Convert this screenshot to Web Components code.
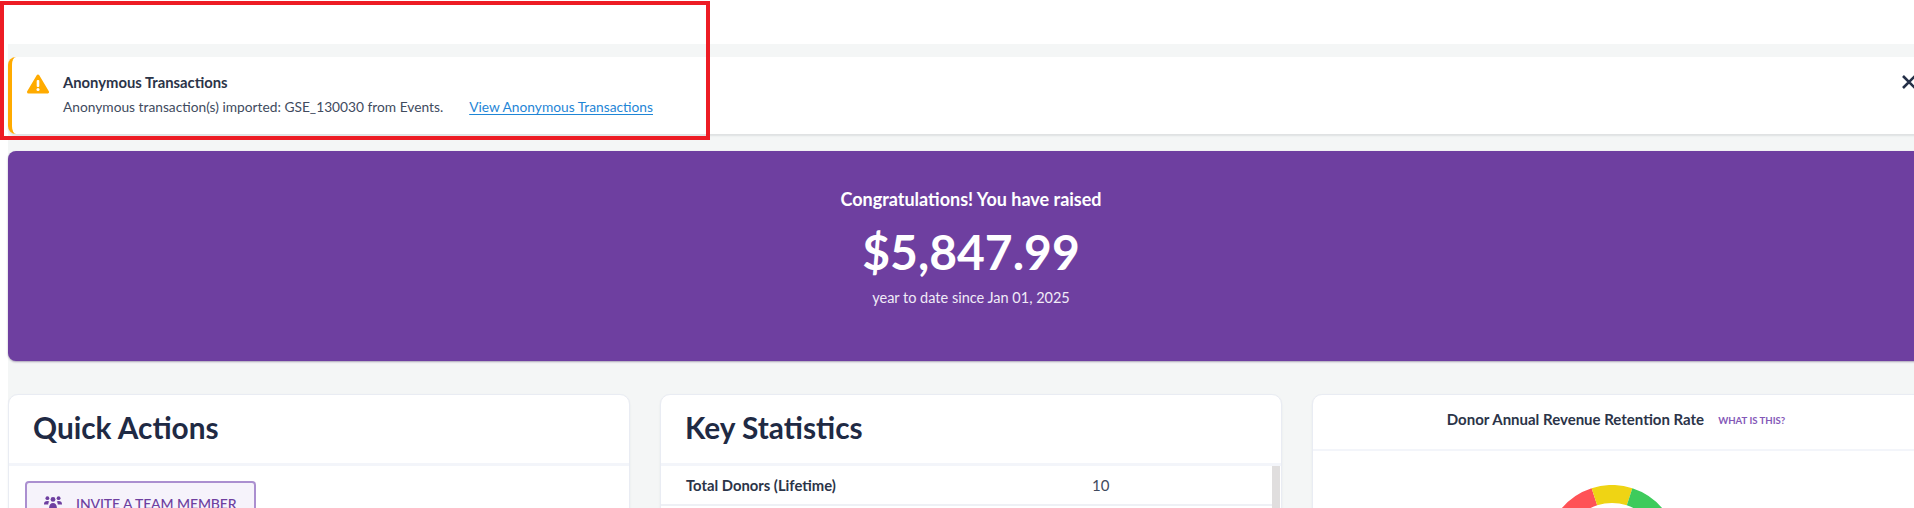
<!DOCTYPE html>
<html>
<head>
<meta charset="utf-8">
<title>Dashboard</title>
<style>
  html, body { margin: 0; height: 508px; overflow: hidden; background: #fff; }
  body { font-family: Lato, "Liberation Sans", sans-serif; }
</style>
</head>
<body>
<dash-page>
  <alert-banner heading="Anonymous Transactions" link="View Anonymous Transactions">Anonymous transaction(s) imported: GSE_130030 from Events.</alert-banner>
  <raised-hero amount="$5,847.99" since="year to date since Jan 01, 2025">Congratulations! You have raised</raised-hero>
  <div slot="cards">
    <dash-card heading="Quick Actions">
      <action-button label="INVITE A TEAM MEMBER"></action-button>
    </dash-card>
    <dash-card heading="Key Statistics" flush>
      <stat-table>
        <stat-row label="Total Donors (Lifetime)" value="10"></stat-row>
      </stat-table>
    </dash-card>
    <dash-card heading="Donor Annual Revenue Retention Rate" small hint="WHAT IS THIS?">
      <retention-gauge></retention-gauge>
    </dash-card>
  </div>
</dash-page>

<script>
class DashPage extends HTMLElement {
  connectedCallback() {
    this.attachShadow({ mode: 'open' });
    this.shadowRoot.innerHTML = `
      <style>
        :host { display: block; position: relative; height: 508px; overflow: hidden; background: #fff; }
        .main {
          margin: 44px 0 0 8px;
          width: 1926px;
          height: 464px;
          box-sizing: border-box;
          padding-top: 13px;
          background: #f4f6f6;
          display: flex;
          flex-direction: column;
        }
        .cards { display: grid; grid-template-columns: repeat(3, 622px); gap: 30px; margin-top: 33px; }
        ::slotted([slot="cards"]) { display: contents; }
        .callout {
          position: absolute;
          left: 0;
          top: 1px;
          width: 710px;
          height: 139px;
          box-sizing: border-box;
          border: 4px solid #ed1c24;
          pointer-events: none;
        }
      </style>
      <div class="main">
        <slot></slot>
        <div class="cards"><slot name="cards"></slot></div>
      </div>
      <div class="callout"></div>
    `;
  }
}

class AlertBanner extends HTMLElement {
  connectedCallback() {
    const heading = this.getAttribute('heading') || '';
    const link = this.getAttribute('link') || '';
    this.attachShadow({ mode: 'open' });
    this.shadowRoot.innerHTML = `
      <style>
        :host { display: block; }
        .alert {
          height: 77px;
          box-sizing: border-box;
          display: flex;
          align-items: flex-start;
          padding: 16px 0 0 15px;
          background: #fff;
          border-left: 4px solid #ffab00;
          border-radius: 8px;
          box-shadow: 0 2px 2px rgba(40, 50, 60, 0.1);
          position: relative;
        }
        .warn { width: 22px; height: 20px; margin: 1px 14px 0 0; flex: none; }
        .heading { font-size: 14.8px; font-weight: 700; line-height: 18px; color: #2b3448; }
        .line { display: flex; margin-top: 7px; font-size: 13.75px; line-height: 18px; color: #414b5e; }
        a { margin-left: 26px; color: #1f86d6; text-decoration: underline; text-underline-offset: 2px; }
        .close {
          position: absolute;
          left: 1889px;
          top: 17px;
          width: 16px;
          height: 16px;
        }
      </style>
      <div class="alert">
        <svg class="warn" viewBox="0 0 22 20"><path d="M11 2L20.500 18H1.500z" fill="#ffab00" stroke="#ffab00" stroke-width="3" stroke-linejoin="round"/><rect x="9.700" y="6" width="2.600" height="7" rx="1" fill="#fff"/><circle cx="11" cy="15.600" r="1.500" fill="#fff"/></svg>
        <div>
          <div class="heading">${heading}</div>
          <div class="line"><span><slot></slot></span><a href="#">${link}</a></div>
        </div>
        <svg class="close" viewBox="0 0 16 16"><path d="M2 2l12 12M14 2L2 14" stroke="#253048" stroke-width="2.600" fill="none"/></svg>
      </div>
    `;
  }
}

class RaisedHero extends HTMLElement {
  connectedCallback() {
    const amount = this.getAttribute('amount') || '';
    const since = this.getAttribute('since') || '';
    this.attachShadow({ mode: 'open' });
    this.shadowRoot.innerHTML = `
      <style>
        :host { display: block; margin-top: 17px; }
        .hero {
          height: 210px;
          box-sizing: border-box;
          padding-top: 37px;
          background: #6e3fa0;
          border-radius: 8px;
          box-shadow: 0 1px 2px rgba(60, 40, 90, 0.4);
          color: #fff;
          display: flex;
          flex-direction: column;
          align-items: center;
        }
        .top { font-size: 18px; font-weight: 700; line-height: 22px; }
        .amount { font-size: 48px; font-weight: 700; line-height: 60px; margin-top: 12px; }
        .since { font-size: 14.500px; line-height: 18px; margin-top: 7px; color: #f1ebf7; }
      </style>
      <div class="hero">
        <div class="top"><slot></slot></div>
        <div class="amount">${amount}</div>
        <div class="since">${since}</div>
      </div>
    `;
  }
}

class DashCard extends HTMLElement {
  connectedCallback() {
    const heading = this.getAttribute('heading') || '';
    const hint = this.getAttribute('hint');
    const small = this.hasAttribute('small');
    this.attachShadow({ mode: 'open' });
    this.shadowRoot.innerHTML = `
      <style>
        :host { display: block; }
        .card {
          height: 200px;
          box-sizing: border-box;
          background: #fff;
          border: 1px solid #e9ecf3;
          border-radius: 10px;
          box-shadow: 0 1px 2px rgba(40, 50, 80, 0.08);
          overflow: hidden;
        }
        header {
          height: 71px;
          box-sizing: border-box;
          padding: 0 24px 4px;
          display: flex;
          align-items: center;
          border-bottom: 3px solid #f3f5fa;
        }
        h2 { margin: 0; font-size: 29.800px; font-weight: 700; color: #1f2a44; }
        header.small { height: 56px; padding: 0 14px 6px 0; justify-content: center; border-bottom-width: 2px; }
        header.small h2 { font-size: 15px; font-weight: 700; color: #2b3448; }
        .hint { margin-left: 14px; font-size: 9.600px; font-weight: 700; color: #8458b8; margin-top: 2px; }
      </style>
      <div class="card">
        <header class="${small ? 'small' : ''}">
          <h2>${heading}</h2>
          ${hint ? `<span class="hint">${hint}</span>` : ''}
        </header>
        <slot></slot>
      </div>
    `;
  }
}

class ActionButton extends HTMLElement {
  connectedCallback() {
    const label = this.getAttribute('label') || '';
    this.attachShadow({ mode: 'open' });
    this.shadowRoot.innerHTML = `
      <style>
        :host { display: block; padding: 15px 0 0 16px; }
        button {
          width: 231px;
          height: 44px;
          box-sizing: border-box;
          display: flex;
          align-items: center;
          padding: 0 0 0 17px;
          font: 500 14px Lato, "Liberation Sans", sans-serif;
          letter-spacing: -0.1px;
          color: #6e3fa0;
          background: #f6f3fb;
          border: 2px solid #ab8fd0;
          border-radius: 4px;
        }
        svg { width: 18px; height: 14px; margin-right: 14px; flex: none; }
      </style>
      <button>
        <svg viewBox="0 0 18 14" fill="#6e3fa0">
          <circle cx="3.400" cy="2.200" r="1.900"/><circle cx="14.600" cy="2.200" r="1.900"/><circle cx="9" cy="3.400" r="2.400"/>
          <path d="M0 8c0-2 1.200-3 3.400-3 .8 0 1.400.2 1.900.5C4.600 6.300 4.200 7.300 4.200 8.500H0zM18 8c0-2-1.200-3-3.400-3-.8 0-1.400.2-1.900.5.7.8 1.100 1.800 1.100 3H18zM5 13c0-4 1.500-6 4-6s4 2 4 6H5z"/>
        </svg>
        ${label}
      </button>
    `;
  }
}

class StatTable extends HTMLElement {
  connectedCallback() {
    this.attachShadow({ mode: 'open' });
    this.shadowRoot.innerHTML = `
      <style>
        :host { display: flex; height: 120px; }
        .rows { flex: 1; }
        .bar { width: 8px; margin-right: 1px; background: #e0dede; }
      </style>
      <div class="rows"><slot></slot></div>
      <div class="bar"></div>
    `;
  }
}

class StatRow extends HTMLElement {
  connectedCallback() {
    this.attachShadow({ mode: 'open' });
    this.shadowRoot.innerHTML = `
      <style>
        :host { display: flex; align-items: center; height: 40px; box-sizing: border-box; border-bottom: 2px solid #eef0f5; font-size: 14.800px; color: #2b3448; }
        .label { width: 431px; padding-left: 25px; box-sizing: border-box; font-weight: 700; }
        .value { font-size: 15px; color: #414b5e; }
      </style>
      <span class="label">${this.getAttribute('label') || ''}</span>
      <span class="value">${this.getAttribute('value') || ''}</span>
    `;
  }
}

class RetentionGauge extends HTMLElement {
  connectedCallback() {
    this.attachShadow({ mode: 'open' });
    this.shadowRoot.innerHTML = `
      <style>
        :host { display: block; padding: 34px 0 0 233px; }
        svg { display: block; width: 132px; height: 80px; }
      </style>
      <svg viewBox="-66 -66 132 80" fill="none" stroke-width="18">
        <path d="M-46.100 -33.500A57 57 0 0 1 -17.600 -54.200" stroke="#ff5256"/>
        <path d="M-17.600 -54.200A57 57 0 0 1 17.600 -54.200" stroke="#efd414"/>
        <path d="M17.600 -54.200A57 57 0 0 1 46.100 -33.500" stroke="#3ecb5c"/>
      </svg>
    `;
  }
}

customElements.define('dash-page', DashPage);
customElements.define('alert-banner', AlertBanner);
customElements.define('raised-hero', RaisedHero);
customElements.define('dash-card', DashCard);
customElements.define('action-button', ActionButton);
customElements.define('stat-table', StatTable);
customElements.define('stat-row', StatRow);
customElements.define('retention-gauge', RetentionGauge);
</script>
</body>
</html>
